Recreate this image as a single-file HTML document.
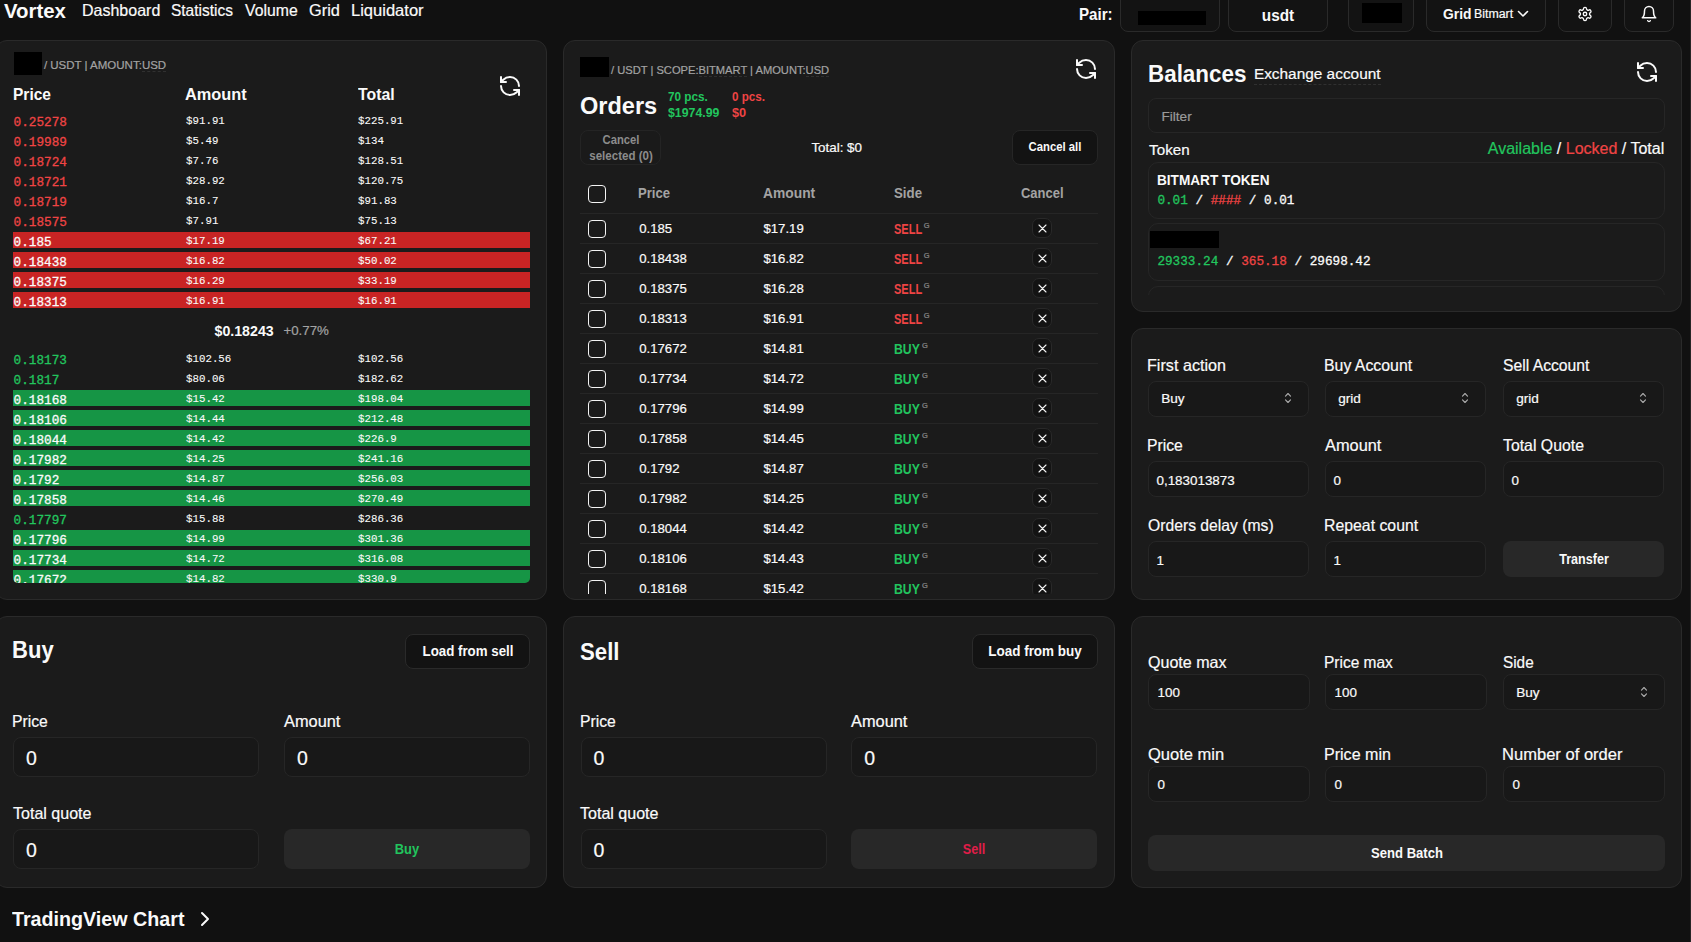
<!DOCTYPE html>
<html><head><meta charset="utf-8"><title>Vortex</title>
<style>
html,body{margin:0;padding:0}
body{width:1691px;height:942px;overflow:hidden;position:relative;background:#111111;font-family:"Liberation Sans", sans-serif;color:#fafafa}
.b{position:absolute;box-sizing:border-box}
.t{position:absolute;line-height:1;white-space:nowrap}
.s{font-family:"Liberation Sans", sans-serif}
.r{-webkit-text-stroke:0.2px currentColor}
.m{font-family:"Liberation Mono", monospace;-webkit-text-stroke:0.3px currentColor}
</style></head><body>
<span class="t s" style="left:4.0px;top:0.93px;font-size:20.4px;font-weight:700;color:#fafafa;">Vortex</span>
<span class="t s r" style="left:81.7px;top:2.32px;font-size:16.28px;font-weight:400;color:#fafafa;transform:scaleX(0.9838);transform-origin:0 0;">Dashboard</span>
<span class="t s r" style="left:171.0px;top:2.32px;font-size:16.28px;font-weight:400;color:#fafafa;transform:scaleX(0.9513);transform-origin:0 0;">Statistics</span>
<span class="t s r" style="left:244.6px;top:2.32px;font-size:16.28px;font-weight:400;color:#fafafa;transform:scaleX(0.9706);transform-origin:0 0;">Volume</span>
<span class="t s r" style="left:309.2px;top:2.32px;font-size:16.28px;font-weight:400;color:#fafafa;transform:scaleX(1.0040);transform-origin:0 0;">Grid</span>
<span class="t s r" style="left:350.6px;top:2.32px;font-size:16.28px;font-weight:400;color:#fafafa;transform:scaleX(1.0158);transform-origin:0 0;">Liquidator</span>
<span class="t s" style="left:1079.4px;top:6.12px;font-size:16.28px;font-weight:700;color:#fafafa;transform:scaleX(0.9303);transform-origin:0 0;">Pair:</span>
<div class="b" style="left:1120px;top:-8px;width:100px;height:40px;background:#131313;border:1px solid #2a2a2a;border-radius:8px;"></div>
<div class="b" style="left:1138px;top:11px;width:68px;height:14px;background:#000;"></div>
<div class="b" style="left:1228px;top:-8px;width:100px;height:40px;background:#131313;border:1px solid #2a2a2a;border-radius:8px;"></div>
<span class="t s" style="left:1078.0px;width:400px;text-align:center;top:7.61px;font-size:15.7px;font-weight:700;color:#fafafa;transform:scaleX(0.9790);transform-origin:200px 0;">usdt</span>
<div class="b" style="left:1348px;top:-8px;width:66px;height:40px;background:#131313;border:1px solid #2a2a2a;border-radius:8px;"></div>
<div class="b" style="left:1362px;top:3px;width:40px;height:20px;background:#000;"></div>
<div class="b" style="left:1426px;top:-8px;width:120px;height:40px;background:#131313;border:1px solid #2a2a2a;border-radius:8px;"></div>
<span class="t s" style="left:1442.8px;top:6.84px;font-size:14.24px;font-weight:700;color:#fafafa;transform:scaleX(0.9727);transform-origin:0 0;">Grid</span>
<span class="t s r" style="left:1474.0px;top:8.19px;font-size:12.65px;font-weight:400;color:#fafafa;transform:scaleX(0.9764);transform-origin:0 0;">Bitmart</span>
<svg class="b" style="left:1517px;top:9px" width="12" height="9" viewBox="0 0 12 9" fill="none" stroke="#fafafa" stroke-width="1.6" stroke-linecap="round" stroke-linejoin="round"><path d="M1.5 2.5l4.5 4.5l4.5 -4.5"/></svg>
<div class="b" style="left:1558px;top:-8px;width:54px;height:40px;background:#131313;border:1px solid #2a2a2a;border-radius:8px;"></div>
<svg class="b" style="left:1577px;top:5.9px" width="16" height="16" viewBox="0 0 24 24" fill="none" stroke="#fafafa" stroke-width="2" stroke-linecap="round" stroke-linejoin="round"><path d="M12.22 2h-.44a2 2 0 0 0-2 2v.18a2 2 0 0 1-1 1.73l-.43.25a2 2 0 0 1-2 0l-.15-.08a2 2 0 0 0-2.73.73l-.22.38a2 2 0 0 0 .73 2.730l.15.1a2 2 0 0 1 1 1.72v.51a2 2 0 0 1-1 1.74l-.15.09a2 2 0 0 0-.73 2.73l.22.38a2 2 0 0 0 2.73.73l.15-.08a2 2 0 0 1 2 0l.43.25a2 2 0 0 1 1 1.73V20a2 2 0 0 0 2 2h.44a2 2 0 0 0 2-2v-.18a2 2 0 0 1 1-1.73l.43-.25a2 2 0 0 1 2 0l.15.08a2 2 0 0 0 2.73-.73l.22-.39a2 2 0 0 0-.73-2.73l-.15-.08a2 2 0 0 1-1-1.74v-.5a2 2 0 0 1 1-1.74l.15-.09a2 2 0 0 0 .73-2.73l-.22-.38a2 2 0 0 0-2.73-.73l-.15.08a2 2 0 0 1-2 0l-.43-.25a2 2 0 0 1-1-1.73V4a2 2 0 0 0-2-2z"/><circle cx="12" cy="12" r="2.6"/></svg>
<div class="b" style="left:1624px;top:-8px;width:50px;height:40px;background:#131313;border:1px solid #2a2a2a;border-radius:8px;"></div>
<svg class="b" style="left:1640px;top:5px" width="18" height="18" viewBox="0 0 24 24" fill="none" stroke="#fafafa" stroke-width="2" stroke-linecap="round" stroke-linejoin="round"><path d="M6 8a6 6 0 0 1 12 0c0 7 3 9 3 9H3s3-2 3-9"/><path d="M10.3 21a1.94 1.94 0 0 0 3.4 0"/></svg>
<div class="b" style="left:1690px;top:0px;width:1px;height:942px;background:#262626;"></div>
<div class="b" style="left:-5px;top:40px;width:552px;height:560px;background:#1b1b1b;border:1px solid #2a2a2a;border-radius:12px;"></div>
<div class="b" style="left:14px;top:52px;width:28px;height:23px;background:#000;"></div>
<span class="t s r" style="left:43.9px;top:60.46px;font-size:11.5px;font-weight:400;color:#a3a3a3;">/ USDT | AMOUNT:<span style="border-bottom:1px dashed #303030">USD</span></span>
<svg class="b" style="left:497.8px;top:73.8px" width="24" height="24" viewBox="0 0 24 24" fill="none" stroke="#fafafa" stroke-width="2" stroke-linecap="round" stroke-linejoin="round"><path d="M21 12a9 9 0 0 0-9-9 9.75 9.75 0 0 0-6.74 2.74L3 8"/><path d="M3 3v5h5"/><path d="M3 12a9 9 0 0 0 9 9 9.75 9.75 0 0 0 6.74-2.74L21 16"/><path d="M16 16h5v5"/></svg>
<span class="t s" style="left:12.6px;top:86.51px;font-size:15.7px;font-weight:700;color:#fafafa;transform:scaleX(0.9887);transform-origin:0 0;">Price</span>
<span class="t s" style="left:185.1px;top:86.51px;font-size:15.7px;font-weight:700;color:#fafafa;transform:scaleX(1.0425);transform-origin:0 0;">Amount</span>
<span class="t s" style="left:357.8px;top:86.51px;font-size:15.7px;font-weight:700;color:#fafafa;transform:scaleX(1.0080);transform-origin:0 0;">Total</span>
<span class="t m" style="left:13.6px;top:116.77px;font-size:12.7px;font-weight:400;color:#ef4444;">0.25278</span>
<span class="t m" style="left:185.5px;top:114.71px;font-size:11.6px;font-weight:400;color:#fafafa;transform:scaleX(0.9300);transform-origin:0 0;-webkit-text-stroke:0.1px currentColor">$91.91</span>
<span class="t m" style="left:358.0px;top:114.71px;font-size:11.6px;font-weight:400;color:#fafafa;transform:scaleX(0.9300);transform-origin:0 0;-webkit-text-stroke:0.1px currentColor">$225.91</span>
<span class="t m" style="left:13.6px;top:136.77px;font-size:12.7px;font-weight:400;color:#ef4444;">0.19989</span>
<span class="t m" style="left:185.5px;top:134.71px;font-size:11.6px;font-weight:400;color:#fafafa;transform:scaleX(0.9300);transform-origin:0 0;-webkit-text-stroke:0.1px currentColor">$5.49</span>
<span class="t m" style="left:358.0px;top:134.71px;font-size:11.6px;font-weight:400;color:#fafafa;transform:scaleX(0.9300);transform-origin:0 0;-webkit-text-stroke:0.1px currentColor">$134</span>
<span class="t m" style="left:13.6px;top:156.77px;font-size:12.7px;font-weight:400;color:#ef4444;">0.18724</span>
<span class="t m" style="left:185.5px;top:154.71px;font-size:11.6px;font-weight:400;color:#fafafa;transform:scaleX(0.9300);transform-origin:0 0;-webkit-text-stroke:0.1px currentColor">$7.76</span>
<span class="t m" style="left:358.0px;top:154.71px;font-size:11.6px;font-weight:400;color:#fafafa;transform:scaleX(0.9300);transform-origin:0 0;-webkit-text-stroke:0.1px currentColor">$128.51</span>
<span class="t m" style="left:13.6px;top:176.77px;font-size:12.7px;font-weight:400;color:#ef4444;">0.18721</span>
<span class="t m" style="left:185.5px;top:174.71px;font-size:11.6px;font-weight:400;color:#fafafa;transform:scaleX(0.9300);transform-origin:0 0;-webkit-text-stroke:0.1px currentColor">$28.92</span>
<span class="t m" style="left:358.0px;top:174.71px;font-size:11.6px;font-weight:400;color:#fafafa;transform:scaleX(0.9300);transform-origin:0 0;-webkit-text-stroke:0.1px currentColor">$120.75</span>
<span class="t m" style="left:13.6px;top:196.77px;font-size:12.7px;font-weight:400;color:#ef4444;">0.18719</span>
<span class="t m" style="left:185.5px;top:194.71px;font-size:11.6px;font-weight:400;color:#fafafa;transform:scaleX(0.9300);transform-origin:0 0;-webkit-text-stroke:0.1px currentColor">$16.7</span>
<span class="t m" style="left:358.0px;top:194.71px;font-size:11.6px;font-weight:400;color:#fafafa;transform:scaleX(0.9300);transform-origin:0 0;-webkit-text-stroke:0.1px currentColor">$91.83</span>
<span class="t m" style="left:13.6px;top:216.77px;font-size:12.7px;font-weight:400;color:#ef4444;">0.18575</span>
<span class="t m" style="left:185.5px;top:214.71px;font-size:11.6px;font-weight:400;color:#fafafa;transform:scaleX(0.9300);transform-origin:0 0;-webkit-text-stroke:0.1px currentColor">$7.91</span>
<span class="t m" style="left:358.0px;top:214.71px;font-size:11.6px;font-weight:400;color:#fafafa;transform:scaleX(0.9300);transform-origin:0 0;-webkit-text-stroke:0.1px currentColor">$75.13</span>
<div class="b" style="left:13px;top:232px;width:517px;height:16px;background:rgba(220,38,38,0.9);"></div>
<span class="t m" style="left:13.6px;top:236.77px;font-size:12.7px;font-weight:400;color:#fafafa;">0.185</span>
<span class="t m" style="left:185.5px;top:234.71px;font-size:11.6px;font-weight:400;color:#fafafa;transform:scaleX(0.9300);transform-origin:0 0;-webkit-text-stroke:0.1px currentColor">$17.19</span>
<span class="t m" style="left:358.0px;top:234.71px;font-size:11.6px;font-weight:400;color:#fafafa;transform:scaleX(0.9300);transform-origin:0 0;-webkit-text-stroke:0.1px currentColor">$67.21</span>
<div class="b" style="left:13px;top:252px;width:517px;height:16px;background:rgba(220,38,38,0.9);"></div>
<span class="t m" style="left:13.6px;top:256.77px;font-size:12.7px;font-weight:400;color:#fafafa;">0.18438</span>
<span class="t m" style="left:185.5px;top:254.71px;font-size:11.6px;font-weight:400;color:#fafafa;transform:scaleX(0.9300);transform-origin:0 0;-webkit-text-stroke:0.1px currentColor">$16.82</span>
<span class="t m" style="left:358.0px;top:254.71px;font-size:11.6px;font-weight:400;color:#fafafa;transform:scaleX(0.9300);transform-origin:0 0;-webkit-text-stroke:0.1px currentColor">$50.02</span>
<div class="b" style="left:13px;top:272px;width:517px;height:16px;background:rgba(220,38,38,0.9);"></div>
<span class="t m" style="left:13.6px;top:276.77px;font-size:12.7px;font-weight:400;color:#fafafa;">0.18375</span>
<span class="t m" style="left:185.5px;top:274.71px;font-size:11.6px;font-weight:400;color:#fafafa;transform:scaleX(0.9300);transform-origin:0 0;-webkit-text-stroke:0.1px currentColor">$16.29</span>
<span class="t m" style="left:358.0px;top:274.71px;font-size:11.6px;font-weight:400;color:#fafafa;transform:scaleX(0.9300);transform-origin:0 0;-webkit-text-stroke:0.1px currentColor">$33.19</span>
<div class="b" style="left:13px;top:292px;width:517px;height:16px;background:rgba(220,38,38,0.9);"></div>
<span class="t m" style="left:13.6px;top:296.77px;font-size:12.7px;font-weight:400;color:#fafafa;">0.18313</span>
<span class="t m" style="left:185.5px;top:294.71px;font-size:11.6px;font-weight:400;color:#fafafa;transform:scaleX(0.9300);transform-origin:0 0;-webkit-text-stroke:0.1px currentColor">$16.91</span>
<span class="t m" style="left:358.0px;top:294.71px;font-size:11.6px;font-weight:400;color:#fafafa;transform:scaleX(0.9300);transform-origin:0 0;-webkit-text-stroke:0.1px currentColor">$16.91</span>
<span class="t s" style="left:214.5px;top:323.68px;font-size:14.2px;font-weight:700;color:#fafafa;">$0.18243</span>
<span class="t s r" style="left:283.4px;top:324.44px;font-size:13.3px;font-weight:400;color:#a3a3a3;">+0.77%</span>
<div class="b" style="left:13px;top:344px;width:517px;height:239px;overflow:hidden;border-radius:0 0 5px 5px">
<span class="t m" style="left:0.6px;top:10.77px;font-size:12.7px;color:#22c55e;">0.18173</span>
<span class="t m" style="left:172.5px;top:8.71px;font-size:11.6px;color:#fafafa;-webkit-text-stroke:0.1px currentColor;transform:scaleX(0.93);transform-origin:0 0">$102.56</span>
<span class="t m" style="left:345.0px;top:8.71px;font-size:11.6px;color:#fafafa;-webkit-text-stroke:0.1px currentColor;transform:scaleX(0.93);transform-origin:0 0">$102.56</span>
<span class="t m" style="left:0.6px;top:30.77px;font-size:12.7px;color:#22c55e;">0.1817</span>
<span class="t m" style="left:172.5px;top:28.71px;font-size:11.6px;color:#fafafa;-webkit-text-stroke:0.1px currentColor;transform:scaleX(0.93);transform-origin:0 0">$80.06</span>
<span class="t m" style="left:345.0px;top:28.71px;font-size:11.6px;color:#fafafa;-webkit-text-stroke:0.1px currentColor;transform:scaleX(0.93);transform-origin:0 0">$182.62</span>
<div class="b" style="left:0;top:46px;width:517px;height:16px;background:rgba(22,163,74,0.9)"></div>
<span class="t m" style="left:0.6px;top:50.77px;font-size:12.7px;color:#fafafa;">0.18168</span>
<span class="t m" style="left:172.5px;top:48.71px;font-size:11.6px;color:#fafafa;-webkit-text-stroke:0.1px currentColor;transform:scaleX(0.93);transform-origin:0 0">$15.42</span>
<span class="t m" style="left:345.0px;top:48.71px;font-size:11.6px;color:#fafafa;-webkit-text-stroke:0.1px currentColor;transform:scaleX(0.93);transform-origin:0 0">$198.04</span>
<div class="b" style="left:0;top:66px;width:517px;height:16px;background:rgba(22,163,74,0.9)"></div>
<span class="t m" style="left:0.6px;top:70.77px;font-size:12.7px;color:#fafafa;">0.18106</span>
<span class="t m" style="left:172.5px;top:68.71px;font-size:11.6px;color:#fafafa;-webkit-text-stroke:0.1px currentColor;transform:scaleX(0.93);transform-origin:0 0">$14.44</span>
<span class="t m" style="left:345.0px;top:68.71px;font-size:11.6px;color:#fafafa;-webkit-text-stroke:0.1px currentColor;transform:scaleX(0.93);transform-origin:0 0">$212.48</span>
<div class="b" style="left:0;top:86px;width:517px;height:16px;background:rgba(22,163,74,0.9)"></div>
<span class="t m" style="left:0.6px;top:90.77px;font-size:12.7px;color:#fafafa;">0.18044</span>
<span class="t m" style="left:172.5px;top:88.71px;font-size:11.6px;color:#fafafa;-webkit-text-stroke:0.1px currentColor;transform:scaleX(0.93);transform-origin:0 0">$14.42</span>
<span class="t m" style="left:345.0px;top:88.71px;font-size:11.6px;color:#fafafa;-webkit-text-stroke:0.1px currentColor;transform:scaleX(0.93);transform-origin:0 0">$226.9</span>
<div class="b" style="left:0;top:106px;width:517px;height:16px;background:rgba(22,163,74,0.9)"></div>
<span class="t m" style="left:0.6px;top:110.77px;font-size:12.7px;color:#fafafa;">0.17982</span>
<span class="t m" style="left:172.5px;top:108.71px;font-size:11.6px;color:#fafafa;-webkit-text-stroke:0.1px currentColor;transform:scaleX(0.93);transform-origin:0 0">$14.25</span>
<span class="t m" style="left:345.0px;top:108.71px;font-size:11.6px;color:#fafafa;-webkit-text-stroke:0.1px currentColor;transform:scaleX(0.93);transform-origin:0 0">$241.16</span>
<div class="b" style="left:0;top:126px;width:517px;height:16px;background:rgba(22,163,74,0.9)"></div>
<span class="t m" style="left:0.6px;top:130.77px;font-size:12.7px;color:#fafafa;">0.1792</span>
<span class="t m" style="left:172.5px;top:128.71px;font-size:11.6px;color:#fafafa;-webkit-text-stroke:0.1px currentColor;transform:scaleX(0.93);transform-origin:0 0">$14.87</span>
<span class="t m" style="left:345.0px;top:128.71px;font-size:11.6px;color:#fafafa;-webkit-text-stroke:0.1px currentColor;transform:scaleX(0.93);transform-origin:0 0">$256.03</span>
<div class="b" style="left:0;top:146px;width:517px;height:16px;background:rgba(22,163,74,0.9)"></div>
<span class="t m" style="left:0.6px;top:150.77px;font-size:12.7px;color:#fafafa;">0.17858</span>
<span class="t m" style="left:172.5px;top:148.71px;font-size:11.6px;color:#fafafa;-webkit-text-stroke:0.1px currentColor;transform:scaleX(0.93);transform-origin:0 0">$14.46</span>
<span class="t m" style="left:345.0px;top:148.71px;font-size:11.6px;color:#fafafa;-webkit-text-stroke:0.1px currentColor;transform:scaleX(0.93);transform-origin:0 0">$270.49</span>
<span class="t m" style="left:0.6px;top:170.77px;font-size:12.7px;color:#22c55e;">0.17797</span>
<span class="t m" style="left:172.5px;top:168.71px;font-size:11.6px;color:#fafafa;-webkit-text-stroke:0.1px currentColor;transform:scaleX(0.93);transform-origin:0 0">$15.88</span>
<span class="t m" style="left:345.0px;top:168.71px;font-size:11.6px;color:#fafafa;-webkit-text-stroke:0.1px currentColor;transform:scaleX(0.93);transform-origin:0 0">$286.36</span>
<div class="b" style="left:0;top:186px;width:517px;height:16px;background:rgba(22,163,74,0.9)"></div>
<span class="t m" style="left:0.6px;top:190.77px;font-size:12.7px;color:#fafafa;">0.17796</span>
<span class="t m" style="left:172.5px;top:188.71px;font-size:11.6px;color:#fafafa;-webkit-text-stroke:0.1px currentColor;transform:scaleX(0.93);transform-origin:0 0">$14.99</span>
<span class="t m" style="left:345.0px;top:188.71px;font-size:11.6px;color:#fafafa;-webkit-text-stroke:0.1px currentColor;transform:scaleX(0.93);transform-origin:0 0">$301.36</span>
<div class="b" style="left:0;top:206px;width:517px;height:16px;background:rgba(22,163,74,0.9)"></div>
<span class="t m" style="left:0.6px;top:210.77px;font-size:12.7px;color:#fafafa;">0.17734</span>
<span class="t m" style="left:172.5px;top:208.71px;font-size:11.6px;color:#fafafa;-webkit-text-stroke:0.1px currentColor;transform:scaleX(0.93);transform-origin:0 0">$14.72</span>
<span class="t m" style="left:345.0px;top:208.71px;font-size:11.6px;color:#fafafa;-webkit-text-stroke:0.1px currentColor;transform:scaleX(0.93);transform-origin:0 0">$316.08</span>
<div class="b" style="left:0;top:226px;width:517px;height:16px;background:rgba(22,163,74,0.9)"></div>
<span class="t m" style="left:0.6px;top:230.77px;font-size:12.7px;color:#fafafa;">0.17672</span>
<span class="t m" style="left:172.5px;top:228.71px;font-size:11.6px;color:#fafafa;-webkit-text-stroke:0.1px currentColor;transform:scaleX(0.93);transform-origin:0 0">$14.82</span>
<span class="t m" style="left:345.0px;top:228.71px;font-size:11.6px;color:#fafafa;-webkit-text-stroke:0.1px currentColor;transform:scaleX(0.93);transform-origin:0 0">$330.9</span>
</div>
<div class="b" style="left:563px;top:40px;width:552px;height:560px;background:#1b1b1b;border:1px solid #2a2a2a;border-radius:12px;"></div>
<div class="b" style="left:580px;top:57px;width:29px;height:19.5px;background:#000;"></div>
<span class="t s r" style="left:611.0px;top:64.56px;font-size:11.15px;font-weight:400;color:#a3a3a3;">/ USDT | SCOPE:<span style="border-bottom:1px dashed #303030">BITMART</span> | AMOUNT:<span style="border-bottom:1px dashed #303030">USD</span></span>
<svg class="b" style="left:1073.9px;top:56.5px" width="24" height="24" viewBox="0 0 24 24" fill="none" stroke="#fafafa" stroke-width="2" stroke-linecap="round" stroke-linejoin="round"><path d="M21 12a9 9 0 0 0-9-9 9.75 9.75 0 0 0-6.74 2.74L3 8"/><path d="M3 3v5h5"/><path d="M3 12a9 9 0 0 0 9 9 9.75 9.75 0 0 0 6.74-2.74L21 16"/><path d="M16 16h5v5"/></svg>
<span class="t s" style="left:579.8px;top:93.92px;font-size:24.42px;font-weight:700;color:#fafafa;transform:scaleX(0.9645);transform-origin:0 0;">Orders</span>
<span class="t s" style="left:668.0px;top:90.97px;font-size:12.79px;font-weight:700;color:#22c55e;transform:scaleX(0.9203);transform-origin:0 0;">70 pcs.</span>
<span class="t s" style="left:668.3px;top:106.67px;font-size:12.79px;font-weight:700;color:#22c55e;transform:scaleX(0.9638);transform-origin:0 0;">$1974.99</span>
<span class="t s" style="left:731.5px;top:90.97px;font-size:12.79px;font-weight:700;color:#ef4444;transform:scaleX(0.9090);transform-origin:0 0;">0 pcs.</span>
<span class="t s" style="left:731.8px;top:106.67px;font-size:12.79px;font-weight:700;color:#ef4444;transform:scaleX(0.9975);transform-origin:0 0;">$0</span>
<div class="b" style="left:580px;top:129.5px;width:80.5px;height:35.0px;background:#1a1a1a;border:1px solid #242424;border-radius:8px;"></div>
<span class="t s" style="left:420.5px;width:400px;text-align:center;top:133.92px;font-size:12.5px;font-weight:700;color:#8c8c8c;transform:scaleX(0.8991);transform-origin:200px 0;">Cancel</span>
<span class="t s" style="left:420.5px;width:400px;text-align:center;top:149.52px;font-size:12.5px;font-weight:700;color:#8c8c8c;transform:scaleX(0.9229);transform-origin:200px 0;">selected (0)</span>
<span class="t s r" style="left:811.4px;top:140.85px;font-size:13.4px;font-weight:400;color:#fafafa;">Total: $0</span>
<div class="b" style="left:1012px;top:129.5px;width:86px;height:35.0px;background:#131313;border:1px solid #262626;border-radius:8px;"></div>
<span class="t s" style="left:854.8px;width:400px;text-align:center;top:141.24px;font-size:12.94px;font-weight:700;color:#fafafa;transform:scaleX(0.8736);transform-origin:200px 0;">Cancel all</span>
<div class="b" style="left:588px;top:185px;width:18px;height:18px;box-sizing:border-box;border:1.5px solid #f5f5f5;border-radius:4px"></div>
<span class="t s" style="left:638.3px;top:186.04px;font-size:14.24px;font-weight:700;color:#a3a3a3;transform:scaleX(0.9220);transform-origin:0 0;">Price</span>
<span class="t s" style="left:763.1px;top:186.04px;font-size:14.24px;font-weight:700;color:#a3a3a3;transform:scaleX(0.9705);transform-origin:0 0;">Amount</span>
<span class="t s" style="left:893.8px;top:186.04px;font-size:14.24px;font-weight:700;color:#a3a3a3;transform:scaleX(0.9320);transform-origin:0 0;">Side</span>
<span class="t s" style="left:1020.5px;top:186.04px;font-size:14.24px;font-weight:700;color:#a3a3a3;transform:scaleX(0.9109);transform-origin:0 0;">Cancel</span>
<div class="b" style="left:580px;top:213px;width:518px;height:1px;background:#262626;"></div>
<div class="b" style="left:580px;top:214px;width:518px;height:380px;overflow:hidden">
<div class="b" style="left:0;top:29px;width:518px;height:1px;background:#262626"></div>
<div class="b" style="left:8px;top:6px;width:18px;height:18px;box-sizing:border-box;border:1.5px solid #f5f5f5;border-radius:4px"></div>
<span class="t s r" style="left:59.2px;top:8.12px;font-size:13.2px;font-weight:400;color:#fafafa;">0.185</span>
<span class="t s r" style="left:183.4px;top:8.12px;font-size:13.2px;font-weight:400;color:#fafafa;">$17.19</span>
<span class="t s" style="left:313.8px;top:8.52px;font-size:13.8px;font-weight:700;color:#ef4444;transform:scaleX(0.8);transform-origin:0 0;">SELL</span>
<span class="t s r" style="left:343.8px;top:7.65px;font-size:7.5px;font-weight:400;color:#8a8a8a;">G</span>
<div class="b" style="left:452px;top:4px;width:20px;height:20px;box-sizing:border-box;background:#131313;border:1px solid #292929;border-radius:7px"></div>
<svg class="b" style="left:457.5px;top:9.5px" width="9" height="9" viewBox="0 0 9 9" stroke="#f5f5f5" stroke-width="1.1" stroke-linecap="round"><path d="M1 1L8 8M8 1L1 8"/></svg>
<div class="b" style="left:0;top:59px;width:518px;height:1px;background:#262626"></div>
<div class="b" style="left:8px;top:36px;width:18px;height:18px;box-sizing:border-box;border:1.5px solid #f5f5f5;border-radius:4px"></div>
<span class="t s r" style="left:59.2px;top:38.12px;font-size:13.2px;font-weight:400;color:#fafafa;">0.18438</span>
<span class="t s r" style="left:183.4px;top:38.12px;font-size:13.2px;font-weight:400;color:#fafafa;">$16.82</span>
<span class="t s" style="left:313.8px;top:38.52px;font-size:13.8px;font-weight:700;color:#ef4444;transform:scaleX(0.8);transform-origin:0 0;">SELL</span>
<span class="t s r" style="left:343.8px;top:37.65px;font-size:7.5px;font-weight:400;color:#8a8a8a;">G</span>
<div class="b" style="left:452px;top:34px;width:20px;height:20px;box-sizing:border-box;background:#131313;border:1px solid #292929;border-radius:7px"></div>
<svg class="b" style="left:457.5px;top:39.5px" width="9" height="9" viewBox="0 0 9 9" stroke="#f5f5f5" stroke-width="1.1" stroke-linecap="round"><path d="M1 1L8 8M8 1L1 8"/></svg>
<div class="b" style="left:0;top:89px;width:518px;height:1px;background:#262626"></div>
<div class="b" style="left:8px;top:66px;width:18px;height:18px;box-sizing:border-box;border:1.5px solid #f5f5f5;border-radius:4px"></div>
<span class="t s r" style="left:59.2px;top:68.12px;font-size:13.2px;font-weight:400;color:#fafafa;">0.18375</span>
<span class="t s r" style="left:183.4px;top:68.12px;font-size:13.2px;font-weight:400;color:#fafafa;">$16.28</span>
<span class="t s" style="left:313.8px;top:68.52px;font-size:13.8px;font-weight:700;color:#ef4444;transform:scaleX(0.8);transform-origin:0 0;">SELL</span>
<span class="t s r" style="left:343.8px;top:67.65px;font-size:7.5px;font-weight:400;color:#8a8a8a;">G</span>
<div class="b" style="left:452px;top:64px;width:20px;height:20px;box-sizing:border-box;background:#131313;border:1px solid #292929;border-radius:7px"></div>
<svg class="b" style="left:457.5px;top:69.5px" width="9" height="9" viewBox="0 0 9 9" stroke="#f5f5f5" stroke-width="1.1" stroke-linecap="round"><path d="M1 1L8 8M8 1L1 8"/></svg>
<div class="b" style="left:0;top:119px;width:518px;height:1px;background:#262626"></div>
<div class="b" style="left:8px;top:96px;width:18px;height:18px;box-sizing:border-box;border:1.5px solid #f5f5f5;border-radius:4px"></div>
<span class="t s r" style="left:59.2px;top:98.12px;font-size:13.2px;font-weight:400;color:#fafafa;">0.18313</span>
<span class="t s r" style="left:183.4px;top:98.12px;font-size:13.2px;font-weight:400;color:#fafafa;">$16.91</span>
<span class="t s" style="left:313.8px;top:98.52px;font-size:13.8px;font-weight:700;color:#ef4444;transform:scaleX(0.8);transform-origin:0 0;">SELL</span>
<span class="t s r" style="left:343.8px;top:97.65px;font-size:7.5px;font-weight:400;color:#8a8a8a;">G</span>
<div class="b" style="left:452px;top:94px;width:20px;height:20px;box-sizing:border-box;background:#131313;border:1px solid #292929;border-radius:7px"></div>
<svg class="b" style="left:457.5px;top:99.5px" width="9" height="9" viewBox="0 0 9 9" stroke="#f5f5f5" stroke-width="1.1" stroke-linecap="round"><path d="M1 1L8 8M8 1L1 8"/></svg>
<div class="b" style="left:0;top:149px;width:518px;height:1px;background:#262626"></div>
<div class="b" style="left:8px;top:126px;width:18px;height:18px;box-sizing:border-box;border:1.5px solid #f5f5f5;border-radius:4px"></div>
<span class="t s r" style="left:59.2px;top:128.12px;font-size:13.2px;font-weight:400;color:#fafafa;">0.17672</span>
<span class="t s r" style="left:183.4px;top:128.12px;font-size:13.2px;font-weight:400;color:#fafafa;">$14.81</span>
<span class="t s" style="left:313.8px;top:128.52px;font-size:13.8px;font-weight:700;color:#22c55e;transform:scaleX(0.885);transform-origin:0 0;">BUY</span>
<span class="t s r" style="left:341.9px;top:127.65px;font-size:7.5px;font-weight:400;color:#8a8a8a;">G</span>
<div class="b" style="left:452px;top:124px;width:20px;height:20px;box-sizing:border-box;background:#131313;border:1px solid #292929;border-radius:7px"></div>
<svg class="b" style="left:457.5px;top:129.5px" width="9" height="9" viewBox="0 0 9 9" stroke="#f5f5f5" stroke-width="1.1" stroke-linecap="round"><path d="M1 1L8 8M8 1L1 8"/></svg>
<div class="b" style="left:0;top:179px;width:518px;height:1px;background:#262626"></div>
<div class="b" style="left:8px;top:156px;width:18px;height:18px;box-sizing:border-box;border:1.5px solid #f5f5f5;border-radius:4px"></div>
<span class="t s r" style="left:59.2px;top:158.12px;font-size:13.2px;font-weight:400;color:#fafafa;">0.17734</span>
<span class="t s r" style="left:183.4px;top:158.12px;font-size:13.2px;font-weight:400;color:#fafafa;">$14.72</span>
<span class="t s" style="left:313.8px;top:158.52px;font-size:13.8px;font-weight:700;color:#22c55e;transform:scaleX(0.885);transform-origin:0 0;">BUY</span>
<span class="t s r" style="left:341.9px;top:157.65px;font-size:7.5px;font-weight:400;color:#8a8a8a;">G</span>
<div class="b" style="left:452px;top:154px;width:20px;height:20px;box-sizing:border-box;background:#131313;border:1px solid #292929;border-radius:7px"></div>
<svg class="b" style="left:457.5px;top:159.5px" width="9" height="9" viewBox="0 0 9 9" stroke="#f5f5f5" stroke-width="1.1" stroke-linecap="round"><path d="M1 1L8 8M8 1L1 8"/></svg>
<div class="b" style="left:0;top:209px;width:518px;height:1px;background:#262626"></div>
<div class="b" style="left:8px;top:186px;width:18px;height:18px;box-sizing:border-box;border:1.5px solid #f5f5f5;border-radius:4px"></div>
<span class="t s r" style="left:59.2px;top:188.12px;font-size:13.2px;font-weight:400;color:#fafafa;">0.17796</span>
<span class="t s r" style="left:183.4px;top:188.12px;font-size:13.2px;font-weight:400;color:#fafafa;">$14.99</span>
<span class="t s" style="left:313.8px;top:188.52px;font-size:13.8px;font-weight:700;color:#22c55e;transform:scaleX(0.885);transform-origin:0 0;">BUY</span>
<span class="t s r" style="left:341.9px;top:187.65px;font-size:7.5px;font-weight:400;color:#8a8a8a;">G</span>
<div class="b" style="left:452px;top:184px;width:20px;height:20px;box-sizing:border-box;background:#131313;border:1px solid #292929;border-radius:7px"></div>
<svg class="b" style="left:457.5px;top:189.5px" width="9" height="9" viewBox="0 0 9 9" stroke="#f5f5f5" stroke-width="1.1" stroke-linecap="round"><path d="M1 1L8 8M8 1L1 8"/></svg>
<div class="b" style="left:0;top:239px;width:518px;height:1px;background:#262626"></div>
<div class="b" style="left:8px;top:216px;width:18px;height:18px;box-sizing:border-box;border:1.5px solid #f5f5f5;border-radius:4px"></div>
<span class="t s r" style="left:59.2px;top:218.12px;font-size:13.2px;font-weight:400;color:#fafafa;">0.17858</span>
<span class="t s r" style="left:183.4px;top:218.12px;font-size:13.2px;font-weight:400;color:#fafafa;">$14.45</span>
<span class="t s" style="left:313.8px;top:218.52px;font-size:13.8px;font-weight:700;color:#22c55e;transform:scaleX(0.885);transform-origin:0 0;">BUY</span>
<span class="t s r" style="left:341.9px;top:217.65px;font-size:7.5px;font-weight:400;color:#8a8a8a;">G</span>
<div class="b" style="left:452px;top:214px;width:20px;height:20px;box-sizing:border-box;background:#131313;border:1px solid #292929;border-radius:7px"></div>
<svg class="b" style="left:457.5px;top:219.5px" width="9" height="9" viewBox="0 0 9 9" stroke="#f5f5f5" stroke-width="1.1" stroke-linecap="round"><path d="M1 1L8 8M8 1L1 8"/></svg>
<div class="b" style="left:0;top:269px;width:518px;height:1px;background:#262626"></div>
<div class="b" style="left:8px;top:246px;width:18px;height:18px;box-sizing:border-box;border:1.5px solid #f5f5f5;border-radius:4px"></div>
<span class="t s r" style="left:59.2px;top:248.12px;font-size:13.2px;font-weight:400;color:#fafafa;">0.1792</span>
<span class="t s r" style="left:183.4px;top:248.12px;font-size:13.2px;font-weight:400;color:#fafafa;">$14.87</span>
<span class="t s" style="left:313.8px;top:248.52px;font-size:13.8px;font-weight:700;color:#22c55e;transform:scaleX(0.885);transform-origin:0 0;">BUY</span>
<span class="t s r" style="left:341.9px;top:247.65px;font-size:7.5px;font-weight:400;color:#8a8a8a;">G</span>
<div class="b" style="left:452px;top:244px;width:20px;height:20px;box-sizing:border-box;background:#131313;border:1px solid #292929;border-radius:7px"></div>
<svg class="b" style="left:457.5px;top:249.5px" width="9" height="9" viewBox="0 0 9 9" stroke="#f5f5f5" stroke-width="1.1" stroke-linecap="round"><path d="M1 1L8 8M8 1L1 8"/></svg>
<div class="b" style="left:0;top:299px;width:518px;height:1px;background:#262626"></div>
<div class="b" style="left:8px;top:276px;width:18px;height:18px;box-sizing:border-box;border:1.5px solid #f5f5f5;border-radius:4px"></div>
<span class="t s r" style="left:59.2px;top:278.12px;font-size:13.2px;font-weight:400;color:#fafafa;">0.17982</span>
<span class="t s r" style="left:183.4px;top:278.12px;font-size:13.2px;font-weight:400;color:#fafafa;">$14.25</span>
<span class="t s" style="left:313.8px;top:278.52px;font-size:13.8px;font-weight:700;color:#22c55e;transform:scaleX(0.885);transform-origin:0 0;">BUY</span>
<span class="t s r" style="left:341.9px;top:277.65px;font-size:7.5px;font-weight:400;color:#8a8a8a;">G</span>
<div class="b" style="left:452px;top:274px;width:20px;height:20px;box-sizing:border-box;background:#131313;border:1px solid #292929;border-radius:7px"></div>
<svg class="b" style="left:457.5px;top:279.5px" width="9" height="9" viewBox="0 0 9 9" stroke="#f5f5f5" stroke-width="1.1" stroke-linecap="round"><path d="M1 1L8 8M8 1L1 8"/></svg>
<div class="b" style="left:0;top:329px;width:518px;height:1px;background:#262626"></div>
<div class="b" style="left:8px;top:306px;width:18px;height:18px;box-sizing:border-box;border:1.5px solid #f5f5f5;border-radius:4px"></div>
<span class="t s r" style="left:59.2px;top:308.12px;font-size:13.2px;font-weight:400;color:#fafafa;">0.18044</span>
<span class="t s r" style="left:183.4px;top:308.12px;font-size:13.2px;font-weight:400;color:#fafafa;">$14.42</span>
<span class="t s" style="left:313.8px;top:308.52px;font-size:13.8px;font-weight:700;color:#22c55e;transform:scaleX(0.885);transform-origin:0 0;">BUY</span>
<span class="t s r" style="left:341.9px;top:307.65px;font-size:7.5px;font-weight:400;color:#8a8a8a;">G</span>
<div class="b" style="left:452px;top:304px;width:20px;height:20px;box-sizing:border-box;background:#131313;border:1px solid #292929;border-radius:7px"></div>
<svg class="b" style="left:457.5px;top:309.5px" width="9" height="9" viewBox="0 0 9 9" stroke="#f5f5f5" stroke-width="1.1" stroke-linecap="round"><path d="M1 1L8 8M8 1L1 8"/></svg>
<div class="b" style="left:0;top:359px;width:518px;height:1px;background:#262626"></div>
<div class="b" style="left:8px;top:336px;width:18px;height:18px;box-sizing:border-box;border:1.5px solid #f5f5f5;border-radius:4px"></div>
<span class="t s r" style="left:59.2px;top:338.12px;font-size:13.2px;font-weight:400;color:#fafafa;">0.18106</span>
<span class="t s r" style="left:183.4px;top:338.12px;font-size:13.2px;font-weight:400;color:#fafafa;">$14.43</span>
<span class="t s" style="left:313.8px;top:338.52px;font-size:13.8px;font-weight:700;color:#22c55e;transform:scaleX(0.885);transform-origin:0 0;">BUY</span>
<span class="t s r" style="left:341.9px;top:337.65px;font-size:7.5px;font-weight:400;color:#8a8a8a;">G</span>
<div class="b" style="left:452px;top:334px;width:20px;height:20px;box-sizing:border-box;background:#131313;border:1px solid #292929;border-radius:7px"></div>
<svg class="b" style="left:457.5px;top:339.5px" width="9" height="9" viewBox="0 0 9 9" stroke="#f5f5f5" stroke-width="1.1" stroke-linecap="round"><path d="M1 1L8 8M8 1L1 8"/></svg>
<div class="b" style="left:0;top:389px;width:518px;height:1px;background:#262626"></div>
<div class="b" style="left:8px;top:366px;width:18px;height:18px;box-sizing:border-box;border:1.5px solid #f5f5f5;border-radius:4px"></div>
<span class="t s r" style="left:59.2px;top:368.12px;font-size:13.2px;font-weight:400;color:#fafafa;">0.18168</span>
<span class="t s r" style="left:183.4px;top:368.12px;font-size:13.2px;font-weight:400;color:#fafafa;">$15.42</span>
<span class="t s" style="left:313.8px;top:368.52px;font-size:13.8px;font-weight:700;color:#22c55e;transform:scaleX(0.885);transform-origin:0 0;">BUY</span>
<span class="t s r" style="left:341.9px;top:367.65px;font-size:7.5px;font-weight:400;color:#8a8a8a;">G</span>
<div class="b" style="left:452px;top:364px;width:20px;height:20px;box-sizing:border-box;background:#131313;border:1px solid #292929;border-radius:7px"></div>
<svg class="b" style="left:457.5px;top:369.5px" width="9" height="9" viewBox="0 0 9 9" stroke="#f5f5f5" stroke-width="1.1" stroke-linecap="round"><path d="M1 1L8 8M8 1L1 8"/></svg>
</div>
<div class="b" style="left:1131px;top:40px;width:551px;height:272px;background:#1b1b1b;border:1px solid #2a2a2a;border-radius:12px;"></div>
<span class="t s" style="left:1147.6px;top:62.07px;font-size:24.42px;font-weight:700;color:#fafafa;transform:scaleX(0.9178);transform-origin:0 0;">Balances</span>
<span class="t s r" style="left:1253.9px;top:66.46px;font-size:15.4px;font-weight:400;color:#fafafa;"><span style="border-bottom:1px dashed #303030;padding-bottom:2px">Exchange account</span></span>
<svg class="b" style="left:1634.6px;top:60.4px" width="24" height="24" viewBox="0 0 24 24" fill="none" stroke="#fafafa" stroke-width="2" stroke-linecap="round" stroke-linejoin="round"><path d="M21 12a9 9 0 0 0-9-9 9.75 9.75 0 0 0-6.74 2.74L3 8"/><path d="M3 3v5h5"/><path d="M3 12a9 9 0 0 0 9 9 9.75 9.75 0 0 0 6.74-2.74L21 16"/><path d="M16 16h5v5"/></svg>
<div class="b" style="left:1148px;top:97.5px;width:517px;height:35.0px;background:#1a1a1a;border:1px solid #262626;border-radius:8px;"></div>
<span class="t s r" style="left:1161.5px;top:109.68px;font-size:13.6px;font-weight:400;color:#9a9a9a;">Filter</span>
<span class="t s r" style="left:1149.1px;top:142.23px;font-size:15.2px;font-weight:400;color:#fafafa;">Token</span>
<span class="t s r" style="right:26.8px;text-align:right;top:140.95px;font-size:16px;font-weight:400;color:#fafafa;"><span style="color:#22c55e">Available</span> / <span style="color:#ef4444">Locked</span> / Total</span>
<div class="b" style="left:1148px;top:161px;width:517px;height:133.6px;overflow:hidden">
<div class="b" style="left:0;top:0.5px;width:517px;height:57.0px;box-sizing:border-box;border:1px solid #262626;border-radius:10px"></div>
<span class="t s" style="left:9.4px;top:11.82px;font-size:14.39px;font-weight:700;color:#fafafa;transform:scaleX(0.9474);transform-origin:0 0;">BITMART TOKEN</span>
<span class="t m" style="left:9.4px;top:33.97px;font-size:12.7px;font-weight:400;color:#fafafa;"><span style="color:#22c55e">0.01</span> / <span style="color:#ef4444">####</span> / 0.01</span>
<div class="b" style="left:0;top:62px;width:517px;height:57.5px;box-sizing:border-box;border:1px solid #262626;border-radius:10px"></div>
<div class="b" style="left:1.5px;top:70px;width:69.5px;height:16.5px;background:#000"></div>
<span class="t m" style="left:9.4px;top:95.37px;font-size:12.7px;font-weight:400;color:#fafafa;"><span style="color:#22c55e">29333.24</span> / <span style="color:#ef4444">365.18</span> / 29698.42</span>
<div class="b" style="left:0;top:124.5px;width:517px;height:56.5px;box-sizing:border-box;border:1px solid #262626;border-radius:10px"></div>
</div>
<div class="b" style="left:1131px;top:328px;width:551px;height:272px;background:#1b1b1b;border:1px solid #2a2a2a;border-radius:12px;"></div>
<span class="t s r" style="left:1147.0px;top:357.22px;font-size:16.28px;font-weight:400;color:#fafafa;transform:scaleX(0.9933);transform-origin:0 0;">First action</span>
<span class="t s r" style="left:1324.0px;top:357.22px;font-size:16.28px;font-weight:400;color:#fafafa;transform:scaleX(0.9751);transform-origin:0 0;">Buy Account</span>
<span class="t s r" style="left:1502.6px;top:357.22px;font-size:16.28px;font-weight:400;color:#fafafa;transform:scaleX(0.9651);transform-origin:0 0;">Sell Account</span>
<div class="b" style="left:1148px;top:381px;width:161px;height:35.5px;background:#181818;border:1px solid #262626;border-radius:8px;"></div>
<span class="t s r" style="left:1161.2px;top:392.28px;font-size:13.6px;font-weight:400;color:#fafafa;">Buy</span>
<svg class="b" style="left:1283.5px;top:392px" width="8" height="12" viewBox="0 0 8 12" fill="none" stroke="#ababab" stroke-width="1.15" stroke-linecap="round" stroke-linejoin="round"><path d="M1.5 4.1L4 1.5L6.5 4.1M1.5 7.9L4 10.5L6.5 7.9"/></svg>
<div class="b" style="left:1325px;top:381px;width:161px;height:35.5px;background:#181818;border:1px solid #262626;border-radius:8px;"></div>
<span class="t s r" style="left:1338.2px;top:392.28px;font-size:13.6px;font-weight:400;color:#fafafa;">grid</span>
<svg class="b" style="left:1460.5px;top:392px" width="8" height="12" viewBox="0 0 8 12" fill="none" stroke="#ababab" stroke-width="1.15" stroke-linecap="round" stroke-linejoin="round"><path d="M1.5 4.1L4 1.5L6.5 4.1M1.5 7.9L4 10.5L6.5 7.9"/></svg>
<div class="b" style="left:1503px;top:381px;width:161px;height:35.5px;background:#181818;border:1px solid #262626;border-radius:8px;"></div>
<span class="t s r" style="left:1516.2px;top:392.28px;font-size:13.6px;font-weight:400;color:#fafafa;">grid</span>
<svg class="b" style="left:1638.5px;top:392px" width="8" height="12" viewBox="0 0 8 12" fill="none" stroke="#ababab" stroke-width="1.15" stroke-linecap="round" stroke-linejoin="round"><path d="M1.5 4.1L4 1.5L6.5 4.1M1.5 7.9L4 10.5L6.5 7.9"/></svg>
<span class="t s r" style="left:1147.0px;top:437.02px;font-size:16.28px;font-weight:400;color:#fafafa;transform:scaleX(0.9649);transform-origin:0 0;">Price</span>
<span class="t s r" style="left:1325.3px;top:437.02px;font-size:16.28px;font-weight:400;color:#fafafa;transform:scaleX(1.0062);transform-origin:0 0;">Amount</span>
<span class="t s r" style="left:1502.9px;top:437.02px;font-size:16.28px;font-weight:400;color:#fafafa;transform:scaleX(0.9730);transform-origin:0 0;">Total Quote</span>
<div class="b" style="left:1148px;top:461px;width:161px;height:35.5px;background:#181818;border:1px solid #262626;border-radius:8px;"></div>
<span class="t s r" style="left:1156.5px;top:473.65px;font-size:13.4px;font-weight:400;color:#fafafa;">0,183013873</span>
<div class="b" style="left:1325px;top:461px;width:161px;height:35.5px;background:#181818;border:1px solid #262626;border-radius:8px;"></div>
<span class="t s r" style="left:1333.5px;top:473.65px;font-size:13.4px;font-weight:400;color:#fafafa;">0</span>
<div class="b" style="left:1503px;top:461px;width:161px;height:35.5px;background:#181818;border:1px solid #262626;border-radius:8px;"></div>
<span class="t s r" style="left:1511.5px;top:473.65px;font-size:13.4px;font-weight:400;color:#fafafa;">0</span>
<span class="t s r" style="left:1147.6px;top:517.22px;font-size:16.28px;font-weight:400;color:#fafafa;transform:scaleX(0.9652);transform-origin:0 0;">Orders delay (ms)</span>
<span class="t s r" style="left:1324.0px;top:517.22px;font-size:16.28px;font-weight:400;color:#fafafa;transform:scaleX(0.9729);transform-origin:0 0;">Repeat count</span>
<div class="b" style="left:1148px;top:541px;width:161px;height:35.5px;background:#181818;border:1px solid #262626;border-radius:8px;"></div>
<span class="t s r" style="left:1156.5px;top:553.65px;font-size:13.4px;font-weight:400;color:#fafafa;">1</span>
<div class="b" style="left:1325px;top:541px;width:161px;height:35.5px;background:#181818;border:1px solid #262626;border-radius:8px;"></div>
<span class="t s r" style="left:1333.5px;top:553.65px;font-size:13.4px;font-weight:400;color:#fafafa;">1</span>
<div class="b" style="left:1503px;top:541px;width:161px;height:35.5px;background:#282828;border-radius:8px;"></div>
<span class="t s" style="left:1384.4px;width:400px;text-align:center;top:551.74px;font-size:14.24px;font-weight:700;color:#fafafa;transform:scaleX(0.8830);transform-origin:200px 0;">Transfer</span>
<div class="b" style="left:-5px;top:616px;width:552px;height:272px;background:#1b1b1b;border:1px solid #2a2a2a;border-radius:12px;"></div>
<span class="t s" style="left:12.0px;top:638.01px;font-size:24.56px;font-weight:700;color:#fafafa;transform:scaleX(0.8985);transform-origin:0 0;">Buy</span>
<div class="b" style="left:405px;top:633.5px;width:125px;height:35.0px;background:#131313;border:1px solid #2a2a2a;border-radius:8px;"></div>
<span class="t s" style="left:267.5px;width:400px;text-align:center;top:643.92px;font-size:14.39px;font-weight:700;color:#fafafa;transform:scaleX(0.9246);transform-origin:200px 0;">Load from sell</span>
<span class="t s r" style="left:12.2px;top:713.51px;font-size:15.7px;font-weight:400;color:#fafafa;transform:scaleX(1.0006);transform-origin:0 0;">Price</span>
<span class="t s r" style="left:284.2px;top:713.51px;font-size:15.7px;font-weight:400;color:#fafafa;transform:scaleX(1.0435);transform-origin:0 0;">Amount</span>
<div class="b" style="left:13px;top:737px;width:246px;height:40px;background:#181818;border:1px solid #262626;border-radius:8px;"></div>
<span class="t s r" style="left:26.0px;top:749.29px;font-size:19.5px;font-weight:400;color:#fafafa;">0</span>
<div class="b" style="left:284px;top:737px;width:246px;height:40px;background:#181818;border:1px solid #262626;border-radius:8px;"></div>
<span class="t s r" style="left:297.0px;top:749.29px;font-size:19.5px;font-weight:400;color:#fafafa;">0</span>
<span class="t s r" style="left:12.8px;top:805.71px;font-size:15.7px;font-weight:400;color:#fafafa;transform:scaleX(1.0220);transform-origin:0 0;">Total quote</span>
<div class="b" style="left:13px;top:829px;width:246px;height:40px;background:#181818;border:1px solid #262626;border-radius:8px;"></div>
<span class="t s r" style="left:26.0px;top:841.09px;font-size:19.5px;font-weight:400;color:#fafafa;">0</span>
<div class="b" style="left:284px;top:829px;width:246px;height:40px;background:#282828;border-radius:8px;"></div>
<span class="t s" style="left:207.0px;width:400px;text-align:center;top:842.02px;font-size:14.39px;font-weight:700;color:#22c55e;transform:scaleX(0.8950);transform-origin:200px 0;">Buy</span>
<div class="b" style="left:563px;top:616px;width:552px;height:272px;background:#1b1b1b;border:1px solid #2a2a2a;border-radius:12px;"></div>
<span class="t s" style="left:580.4px;top:640.21px;font-size:24.56px;font-weight:700;color:#fafafa;transform:scaleX(0.9043);transform-origin:0 0;">Sell</span>
<div class="b" style="left:971.5px;top:633.5px;width:126.5px;height:35.0px;background:#131313;border:1px solid #2a2a2a;border-radius:8px;"></div>
<span class="t s" style="left:834.8px;width:400px;text-align:center;top:643.92px;font-size:14.39px;font-weight:700;color:#fafafa;transform:scaleX(0.9364);transform-origin:200px 0;">Load from buy</span>
<span class="t s r" style="left:579.7px;top:713.51px;font-size:15.7px;font-weight:400;color:#fafafa;transform:scaleX(1.0006);transform-origin:0 0;">Price</span>
<span class="t s r" style="left:851.4px;top:713.51px;font-size:15.7px;font-weight:400;color:#fafafa;transform:scaleX(1.0435);transform-origin:0 0;">Amount</span>
<div class="b" style="left:580.5px;top:737px;width:246.0px;height:40px;background:#181818;border:1px solid #262626;border-radius:8px;"></div>
<span class="t s r" style="left:593.5px;top:749.29px;font-size:19.5px;font-weight:400;color:#fafafa;">0</span>
<div class="b" style="left:851.2px;top:737px;width:246.0px;height:40px;background:#181818;border:1px solid #262626;border-radius:8px;"></div>
<span class="t s r" style="left:864.2px;top:749.29px;font-size:19.5px;font-weight:400;color:#fafafa;">0</span>
<span class="t s r" style="left:580.3px;top:805.71px;font-size:15.7px;font-weight:400;color:#fafafa;transform:scaleX(1.0220);transform-origin:0 0;">Total quote</span>
<div class="b" style="left:580.5px;top:829px;width:246.0px;height:40px;background:#181818;border:1px solid #262626;border-radius:8px;"></div>
<span class="t s r" style="left:593.5px;top:841.09px;font-size:19.5px;font-weight:400;color:#fafafa;">0</span>
<div class="b" style="left:851.2px;top:829px;width:246.0px;height:40px;background:#282828;border-radius:8px;"></div>
<span class="t s" style="left:774.2px;width:400px;text-align:center;top:842.02px;font-size:14.39px;font-weight:700;color:#e11d48;transform:scaleX(0.8774);transform-origin:200px 0;">Sell</span>
<div class="b" style="left:1131px;top:616px;width:551px;height:272px;background:#1b1b1b;border:1px solid #2a2a2a;border-radius:12px;"></div>
<span class="t s r" style="left:1147.5px;top:654.22px;font-size:16.28px;font-weight:400;color:#fafafa;transform:scaleX(0.9876);transform-origin:0 0;">Quote max</span>
<span class="t s r" style="left:1324.0px;top:654.22px;font-size:16.28px;font-weight:400;color:#fafafa;transform:scaleX(0.9512);transform-origin:0 0;">Price max</span>
<span class="t s r" style="left:1502.6px;top:654.22px;font-size:16.28px;font-weight:400;color:#fafafa;transform:scaleX(0.9415);transform-origin:0 0;">Side</span>
<div class="b" style="left:1148px;top:674px;width:161.5px;height:36px;background:#181818;border:1px solid #262626;border-radius:8px;"></div>
<span class="t s r" style="left:1157.5px;top:685.85px;font-size:13.4px;font-weight:400;color:#fafafa;">100</span>
<div class="b" style="left:1325px;top:674px;width:161.5px;height:36px;background:#181818;border:1px solid #262626;border-radius:8px;"></div>
<span class="t s r" style="left:1334.5px;top:685.85px;font-size:13.4px;font-weight:400;color:#fafafa;">100</span>
<div class="b" style="left:1503px;top:674px;width:161.5px;height:36px;background:#181818;border:1px solid #262626;border-radius:8px;"></div>
<span class="t s r" style="left:1516.2px;top:685.98px;font-size:13.6px;font-weight:400;color:#fafafa;">Buy</span>
<svg class="b" style="left:1639.5px;top:685.5px" width="8" height="12" viewBox="0 0 8 12" fill="none" stroke="#ababab" stroke-width="1.15" stroke-linecap="round" stroke-linejoin="round"><path d="M1.5 4.1L4 1.5L6.5 4.1M1.5 7.9L4 10.5L6.5 7.9"/></svg>
<span class="t s r" style="left:1147.5px;top:746.22px;font-size:16.28px;font-weight:400;color:#fafafa;transform:scaleX(1.0154);transform-origin:0 0;">Quote min</span>
<span class="t s r" style="left:1324.0px;top:746.22px;font-size:16.28px;font-weight:400;color:#fafafa;transform:scaleX(0.9870);transform-origin:0 0;">Price min</span>
<span class="t s r" style="left:1501.9px;top:746.22px;font-size:16.28px;font-weight:400;color:#fafafa;transform:scaleX(1.0178);transform-origin:0 0;">Number of order</span>
<div class="b" style="left:1148px;top:766px;width:161.5px;height:35.5px;background:#181818;border:1px solid #262626;border-radius:8px;"></div>
<span class="t s r" style="left:1157.5px;top:778.35px;font-size:13.4px;font-weight:400;color:#fafafa;">0</span>
<div class="b" style="left:1325px;top:766px;width:161.5px;height:35.5px;background:#181818;border:1px solid #262626;border-radius:8px;"></div>
<span class="t s r" style="left:1334.5px;top:778.35px;font-size:13.4px;font-weight:400;color:#fafafa;">0</span>
<div class="b" style="left:1503px;top:766px;width:161.5px;height:35.5px;background:#181818;border:1px solid #262626;border-radius:8px;"></div>
<span class="t s r" style="left:1512.5px;top:778.35px;font-size:13.4px;font-weight:400;color:#fafafa;">0</span>
<div class="b" style="left:1148px;top:835px;width:517px;height:36px;background:#282828;border-radius:8px;"></div>
<span class="t s" style="left:1206.5px;width:400px;text-align:center;top:846.24px;font-size:14.24px;font-weight:700;color:#fafafa;transform:scaleX(0.9174);transform-origin:200px 0;">Send Batch</span>
<span class="t s" style="left:12.3px;top:908.77px;font-size:20.35px;font-weight:700;color:#fafafa;transform:scaleX(0.9677);transform-origin:0 0;">TradingView Chart</span>
<svg class="b" style="left:199px;top:910px" width="12" height="18" viewBox="0 0 12 18" fill="none" stroke="#fafafa" stroke-width="2" stroke-linecap="round" stroke-linejoin="round"><path d="M3 3l6 6l-6 6"/></svg>
</body></html>
